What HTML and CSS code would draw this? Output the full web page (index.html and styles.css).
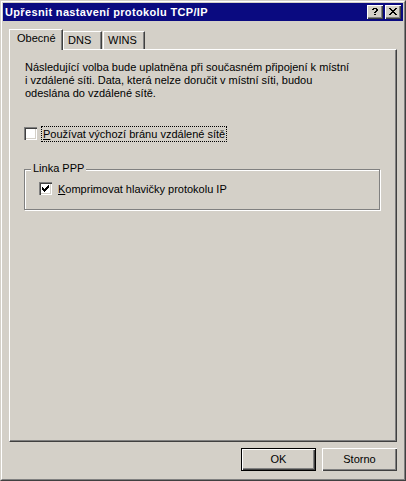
FILE: index.html
```html
<!DOCTYPE html>
<html lang="cs">
<head>
<meta charset="utf-8">
<title>Upřesnit nastavení protokolu TCP/IP</title>
<link rel="stylesheet" href="styles.css">
</head>
<body>
<div class="window">
  <div class="frame">
    <div class="titlebar">
      <span class="title">Upřesnit nastavení protokolu TCP/IP</span>
      <div class="caption-buttons">
        <div class="cbtn" title="Nápověda">
          <svg width="16" height="14" viewBox="0 0 16 14" shape-rendering="crispEdges"><path fill="#000" d="M6 3h4v1h-4z M5 4h2v1h-2z M9 4h2v1h-2z M9 5h2v1h-2z M8 6h2v1h-2z M7 7h2v1h-2z M7 9h2v1h-2z"/></svg>
        </div>
        <div class="cbtn close" title="Zavřít">
          <svg width="16" height="14" viewBox="0 0 16 14" shape-rendering="crispEdges"><path fill="#000" d="M4 3h2v1h-2z M10 3h2v1h-2z M5 4h2v1h-2z M9 4h2v1h-2z M6 5h4v1h-4z M7 6h2v1h-2z M6 7h4v1h-4z M5 8h2v1h-2z M9 8h2v1h-2z M4 9h2v1h-2z M10 9h2v1h-2z"/></svg>
        </div>
      </div>
    </div>

    <div class="tabs">
      <div class="tab selected">Obecné</div>
      <div class="tab tab-dns">DNS</div>
      <div class="tab tab-wins">WINS</div>
    </div>

    <div class="panel">
      <p class="info">Následující volba bude uplatněna při současném připojení k místní<br>i vzdálené síti. Data, která nelze doručit v místní síti, budou<br>odeslána do vzdálené sítě.</p>

      <div class="check-row first">
        <span class="checkbox"></span>
        <span class="label focused"><u>P</u>oužívat výchozí bránu vzdálené sítě</span>
      </div>

      <div class="groupbox">
        <span class="legend">Linka PPP</span>
        <div class="check-row inner">
          <span class="checkbox">
            <svg width="13" height="13" viewBox="0 0 13 13" shape-rendering="crispEdges"><path fill="#000" d="M9 3h1v1h-1z M8 4h2v1h-2z M3 5h1v1h-1z M7 5h3v1h-3z M3 6h2v1h-2z M6 6h3v1h-3z M3 7h5v1h-5z M4 8h3v1h-3z M5 9h1v1h-1z"/></svg>
          </span>
          <span class="label"><u>K</u>omprimovat hlavičky protokolu IP</span>
        </div>
      </div>
    </div>

    <div class="buttons">
      <div class="btn default">OK</div>
      <div class="btn">Storno</div>
    </div>
  </div>
</div>
</body>
</html>
```
FILE: styles.css
```css
html, body {
  margin: 0;
  padding: 0;
  background: #D4D0C8;
}
body {
  font-family: "Liberation Sans", Arial, sans-serif;
  font-size: 11px;
  line-height: 13px;
  color: #000;
}
.window {
  box-sizing: border-box;
  width: 406px;
  height: 481px;
  border: 1px solid;
  border-color: #D4D0C8 #404040 #404040 #D4D0C8;
  background: #D4D0C8;
}
.frame {
  box-sizing: border-box;
  height: 100%;
  border: 1px solid;
  border-color: #FFFFFF #808080 #808080 #FFFFFF;
  padding: 1px;
  display: flex;
  flex-direction: column;
}
.titlebar {
  height: 18px;
  background: #0A0A80;
  display: flex;
  align-items: center;
  justify-content: space-between;
  padding: 0 2px 0 2px;
}
.title {
  color: #fff;
  font-weight: bold;
  font-size: 11px;
  line-height: 14px;
  letter-spacing: 0.35px;
}
.caption-buttons {
  display: flex;
  gap: 2px;
}
.cbtn {
  box-sizing: border-box;
  width: 16px;
  height: 14px;
  background: #D4D0C8;
  box-shadow: inset 1px 1px #FFFFFF, inset -1px -1px #404040, inset -2px -2px #808080;
}
.cbtn svg { display: block; }

.tabs {
  display: flex;
  align-items: flex-end;
  height: 20px;
  margin-top: 8px;
  padding-left: 6px;
}
.tab {
  box-sizing: border-box;
  height: 18px;
  border-top: 1px solid #fff;
  border-left: 1px solid #fff;
  border-right: 1px solid #404040;
  box-shadow: inset -1px 0 #808080;
  padding: 2px 0 0 4px;
  background: #D4D0C8;
}
.tab.selected {
  width: 54px;
  height: 21px;
  margin-bottom: -1px;
  position: relative;
  z-index: 1;
  padding: 2px 0 0 7px;
}
.tab-dns { width: 39px; }
.tab-wins { width: 42px; margin-left: 1px; }

.panel {
  box-sizing: border-box;
  width: 388px;
  height: 393px;
  margin-left: 6px;
  border: 1px solid;
  border-color: #fff #404040 #404040 #fff;
  box-shadow: inset -1px -1px #808080;
  padding: 11px 0 0 14px;
}
.info {
  margin: 0;
  padding-left: 1px;
}
.check-row {
  display: flex;
  align-items: flex-start;
  height: 16px;
}
.check-row.first { margin-top: 26px; }
.checkbox {
  box-sizing: border-box;
  width: 13px;
  height: 13px;
  margin-top: 1px;
  background: #fff;
  box-shadow: inset 1px 1px #808080, inset 2px 2px #404040, inset -1px -1px #fff, inset -2px -2px #D4D0C8;
  flex: none;
}
.checkbox svg { display: block; }
.label {
  margin-left: 4px;
  border: 1px dotted transparent;
  padding: 0 1px;
  line-height: 14px;
}
.label.focused { border-color: #000; }

.groupbox {
  position: relative;
  box-sizing: border-box;
  width: 356px;
  height: 41px;
  margin-top: 27px;
  border: 1px solid #808080;
  box-shadow: inset 1px 1px #fff, 1px 1px #fff;
  padding: 11px 0 0 14px;
}
.legend {
  position: absolute;
  left: 6px;
  top: -8px;
  padding: 0 2px 0 2px;
  background: #D4D0C8;
  line-height: 13px;
}

.buttons {
  display: flex;
  justify-content: flex-end;
  gap: 6px;
  margin-top: 6px;
  padding-right: 6px;
}
.btn {
  box-sizing: border-box;
  width: 75px;
  height: 23px;
  display: flex;
  align-items: center;
  justify-content: center;
  background: #D4D0C8;
  box-shadow: inset 1px 1px #fff, inset -1px -1px #404040, inset -2px -2px #808080;
}
.btn.default {
  border: 1px solid #000;
}
```
